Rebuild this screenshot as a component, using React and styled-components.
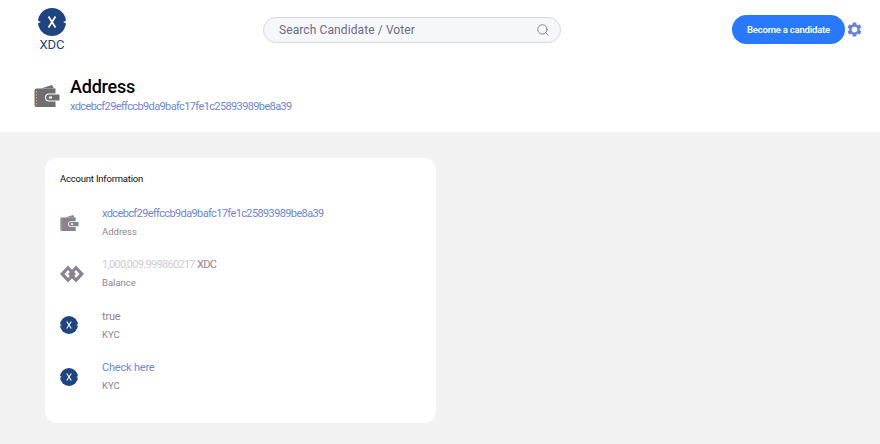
import React from 'react';
import styled, { createGlobalStyle } from 'styled-components';
import { Search } from 'lucide-react';

const Global = createGlobalStyle`
  html, body {
    margin: 0;
    padding: 0;
    background: #f2f2f2;
    font-family: Roboto, "Noto Sans", sans-serif;
  }
`;

const Page = styled.div`
  width: 880px;
  height: 444px;
  overflow: hidden;
  background: #f2f2f2;
`;

const Top = styled.header`
  background: #fff;
  height: 132px;
  box-sizing: border-box;
  padding: 8px 17px 0 34px;
`;

const Nav = styled.div`
  display: flex;
  align-items: flex-start;
  height: 44px;
`;

const Brand = styled.div`
  width: 36px;
  display: flex;
  flex-direction: column;
  align-items: center;
`;

const BrandName = styled.span`
  font-size: 13px;
  line-height: 16px;
  margin-top: 1px;
  color: #1f4580;
`;

const SearchBox = styled.div`
  width: 298px;
  height: 26px;
  box-sizing: border-box;
  margin: 9px 0 0 193px;
  padding: 0 10px 0 15px;
  border: 1px solid #d5d8e0;
  border-radius: 13px;
  background: #f6f7f9;
  display: flex;
  align-items: center;
  justify-content: space-between;
  font-size: 12px;
  letter-spacing: 0.1px;
  color: #6b6c88;
`;

const Actions = styled.div`
  margin: 7px 0 0 171px;
  display: flex;
  align-items: center;
  gap: 1px;
`;

const Become = styled.button`
  width: 113px;
  height: 29px;
  padding: 0;
  border: 0;
  border-radius: 15px;
  background: #2979ff;
  color: #fff;
  font-family: inherit;
  font-size: 9.5px;
  letter-spacing: -0.2px;
  font-weight: 600;
`;

const Heading = styled.div`
  display: flex;
  align-items: center;
  gap: 10px;
  margin-top: 24px;
`;

const Title = styled.h1`
  margin: 0 0 1px;
  font-size: 18px;
  letter-spacing: -0.2px;
  line-height: 22px;
  font-weight: 500;
  color: #000;
`;

const Hash = styled.a`
  display: block;
  font-size: 11px;
  letter-spacing: -0.62px;
  line-height: 16px;
  color: #6e86d8;
`;

const Card = styled.section`
  width: 391px;
  height: 265px;
  box-sizing: border-box;
  margin: 26px 0 0 45px;
  padding: 14px 15px 0;
  background: #fff;
  border-radius: 12px;
`;

const CardTitle = styled.h2`
  margin: 0 0 11px;
  font-size: 9.5px;
  letter-spacing: -0.2px;
  line-height: 14px;
  font-weight: 400;
  color: #111;
`;

const Row = styled.div`
  display: flex;
  align-items: center;
  height: 51.3px;
`;

const IconCell = styled.div`
  width: 42px;
  display: flex;
`;

const Value = styled.div`
  font-size: 11px;
  letter-spacing: ${p => (p.$tight ? '-0.62px' : '-0.2px')};
  line-height: 16px;
  color: ${p => (p.$link ? '#6e86d8' : '#8f8592')};
`;

const Amount = styled.span`
  letter-spacing: -0.7px;
  color: #cfcbd8;
`;

const Caption = styled.div`
  font-size: 9.5px;
  line-height: 14px;
  margin-top: 3px;
  color: #8f8592;
`;

const XdcLogo = ({ size }) => (
  <svg width={size} height={size} viewBox="0 0 28 28">
    <circle cx="14" cy="14" r="14" fill="#1f4580" />
    <path d="M0 12.800l3 1.200-3 1.200zM28 12.800l-3 1.200 3 1.200z" fill="#fff" />
    <path d="M10.500 8.500l7 11M17.500 8.500l-7 11" stroke="#fff" strokeWidth="1.700" fill="none" />
  </svg>
);

const Wallet = ({ width, height, color }) => (
  <svg width={width} height={height} viewBox="0 0 26 24">
    <path d="M7 4.500L18 1l2 3.500z" fill={color} />
    <path d="M2.500 4.500h19v5H15a3.500 3.500 0 0 0 0 8h6.500V23h-19a2 2 0 0 1-2-2V6.500a2 2 0 0 1 2-2z" fill={color} />
    <path d="M2.500 7v14" stroke="#d9a27c" strokeWidth="1.200" strokeDasharray="1.500 1.500" />
    <path d="M15 10.500h10.500v6H15a3 3 0 0 1 0-6z" fill={color} />
    <rect x="15" y="12.500" width="3" height="2" fill="#fff" />
  </svg>
);

const Diamonds = () => (
  <svg width="24" height="18" viewBox="0 0 24 18">
    <path d="M8 0.500l8 8.500-8 8.500L0 9zM8 5L4.500 9 8 13l3.500-4z" fill="#8a8290" fillRule="evenodd" />
    <path d="M16 0.500l8 8.500-8 8.500L8 9zM16 5l-3.500 4 3.500 4 3.500-4z" fill="#8a8290" fillRule="evenodd" />
  </svg>
);

const Gear = () => (
  <svg width="17" height="17" viewBox="0 0 24 24" fill="#6a84d6">
    <path fillRule="evenodd" d="M19.400 13c.04-.330.060-.660.060-1s-.020-.670-.060-1l2.110-1.650a.5.500 0 0 0 .120-.640l-2-3.460a.5.500 0 0 0-.610-.220l-2.490 1a7.300 7.300 0 0 0-1.730-1l-.380-2.650A.5.500 0 0 0 13.930 2h-4a.5.500 0 0 0-.490.420l-.380 2.650a7.700 7.700 0 0 0-1.690 1l-2.490-1a.5.500 0 0 0-.610.220l-2 3.460a.5.500 0 0 0 .120.640L4.500 11c-.04.330-.070.670-.070 1s.030.670.070 1l-2.110 1.650a.5.500 0 0 0-.120.640l2 3.460c.120.220.390.300.610.220l2.490-1c.520.400 1.080.730 1.690 1l.380 2.650c.040.240.250.420.490.420h4c.250 0 .460-.180.490-.420l.380-2.650a7.700 7.700 0 0 0 1.730-1l2.490 1c.220.080.490 0 .610-.220l2-3.460a.5.500 0 0 0-.120-.640zM12 16a4 4 0 1 1 0-8 4 4 0 0 1 0 8z" />
  </svg>
);

const rows = [
  { icon: <Wallet width={19} height={18} color="#8a8290" />, value: 'xdcebcf29effccb9da9bafc17fe1c25893989be8a39', caption: 'Address', link: true, tight: true },
  { icon: <Diamonds />, value: <><Amount>1,000,009.999860217</Amount> XDC</>, caption: 'Balance', tight: true },
  { icon: <XdcLogo size={18} />, value: 'true', caption: 'KYC' },
  { icon: <XdcLogo size={18} />, value: 'Check here', caption: 'KYC', link: true },
];

export default function App() {
  return (
    <Page>
      <Global />
      <Top>
        <Nav>
          <Brand>
            <XdcLogo size={28} />
            <BrandName>XDC</BrandName>
          </Brand>
          <SearchBox>
            Search Candidate / Voter
            <Search size={14} color="#73748c" strokeWidth={1.5} />
          </SearchBox>
          <Actions>
            <Become>Become a candidate</Become>
            <Gear />
          </Actions>
        </Nav>
        <Heading>
          <Wallet width={26} height={24} color="#6f6f6f" />
          <div>
            <Title>Address</Title>
            <Hash>xdcebcf29effccb9da9bafc17fe1c25893989be8a39</Hash>
          </div>
        </Heading>
      </Top>
      <Card>
        <CardTitle>Account Information</CardTitle>
        {rows.map((r, i) => (
          <Row key={i}>
            <IconCell>{r.icon}</IconCell>
            <div>
              <Value $link={r.link} $tight={r.tight}>{r.value}</Value>
              <Caption>{r.caption}</Caption>
            </div>
          </Row>
        ))}
      </Card>
    </Page>
  );
}
